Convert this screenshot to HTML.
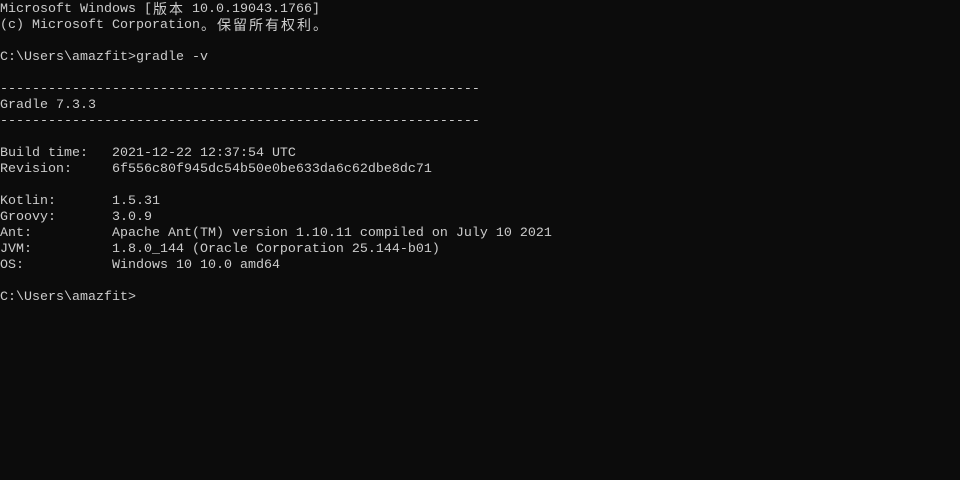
<!DOCTYPE html>
<html><head><meta charset="utf-8"><style>
html,body{margin:0;padding:0;background:#0c0c0c;width:960px;height:480px;overflow:hidden}
pre{margin:0;padding-top:2px;color:#cccccc;font-family:"Liberation Mono","Noto Sans CJK SC",monospace;font-size:13.333px;line-height:16px;white-space:pre}
.c{display:inline-block;width:16px;height:16px;font-family:"Noto Sans CJK SC",sans-serif;font-size:14px;line-height:14px;text-align:center;vertical-align:top}
</style></head><body><pre>Microsoft Windows [<span class="c">版</span><span class="c">本</span> 10.0.19043.1766]
(c) Microsoft Corporation<span class="c">。</span><span class="c">保</span><span class="c">留</span><span class="c">所</span><span class="c">有</span><span class="c">权</span><span class="c">利</span><span class="c">。</span>

C:\Users\amazfit&gt;gradle -v

------------------------------------------------------------
Gradle 7.3.3
------------------------------------------------------------

Build time:   2021-12-22 12:37:54 UTC
Revision:     6f556c80f945dc54b50e0be633da6c62dbe8dc71

Kotlin:       1.5.31
Groovy:       3.0.9
Ant:          Apache Ant(TM) version 1.10.11 compiled on July 10 2021
JVM:          1.8.0_144 (Oracle Corporation 25.144-b01)
OS:           Windows 10 10.0 amd64

C:\Users\amazfit&gt;</pre></body></html>
